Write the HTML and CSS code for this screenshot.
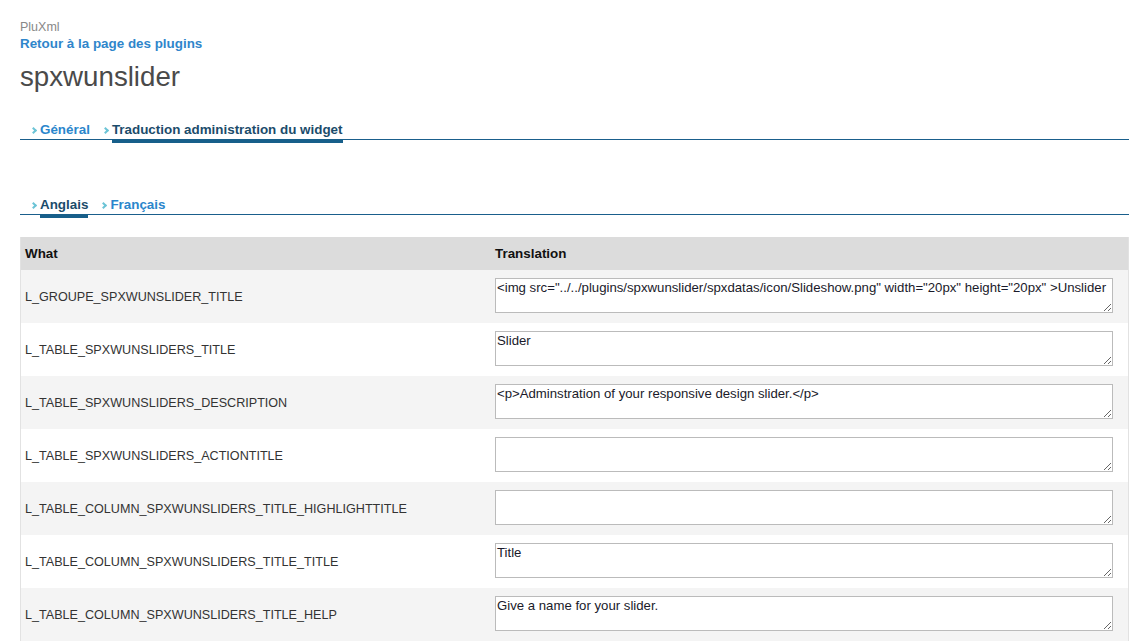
FILE: index.html
```html
<!DOCTYPE html>
<html lang="fr">
<head>
    <meta charset="UTF-8">
    <title>spxwunslider</title>
    <link rel="stylesheet" href="styles.css">
</head>
<body>
    <div class="page">
        <p class="brand">PluXml</p>
        <a class="back" href="#">Retour à la page des plugins</a>
        <h2 class="title">spxwunslider</h2>

        <ul class="tabs">
            <li><a href="#">Général</a></li>
            <li class="active"><a href="#">Traduction administration du widget</a></li>
        </ul>

        <ul class="tabs sub">
            <li class="active"><a href="#">Anglais</a></li>
            <li><a href="#">Français</a></li>
        </ul>

        <table class="trans">
            <thead>
                <tr>
                    <th class="col-what">What</th>
                    <th>Translation</th>
                </tr>
            </thead>
            <tbody>
                <tr>
                    <td>L_GROUPE_SPXWUNSLIDER_TITLE</td>
                    <td><textarea>&lt;img src="../../plugins/spxwunslider/spxdatas/icon/Slideshow.png" width="20px" height="20px" &gt;Unslider</textarea></td>
                </tr>
                <tr>
                    <td>L_TABLE_SPXWUNSLIDERS_TITLE</td>
                    <td><textarea>Slider</textarea></td>
                </tr>
                <tr>
                    <td>L_TABLE_SPXWUNSLIDERS_DESCRIPTION</td>
                    <td><textarea>&lt;p&gt;Adminstration of your responsive design slider.&lt;/p&gt;</textarea></td>
                </tr>
                <tr>
                    <td>L_TABLE_SPXWUNSLIDERS_ACTIONTITLE</td>
                    <td><textarea></textarea></td>
                </tr>
                <tr>
                    <td>L_TABLE_COLUMN_SPXWUNSLIDERS_TITLE_HIGHLIGHTTITLE</td>
                    <td><textarea></textarea></td>
                </tr>
                <tr>
                    <td>L_TABLE_COLUMN_SPXWUNSLIDERS_TITLE_TITLE</td>
                    <td><textarea>Title</textarea></td>
                </tr>
                <tr>
                    <td>L_TABLE_COLUMN_SPXWUNSLIDERS_TITLE_HELP</td>
                    <td><textarea>Give a name for your slider.</textarea></td>
                </tr>
            </tbody>
        </table>
    </div>
</body>
</html>
```

FILE: styles.css
```css
body {
    margin: 0;
    font-family: 'Liberation Sans', Arial, sans-serif;
    background-color: #fff;
    color: #333;
}

.page {
    width: 1109px;
    margin-left: 20px;
    padding-top: 20px;
}

.brand {
    margin: 0;
    font-size: 12.5px;
    line-height: 15px;
    color: #888;
}

.back {
    display: block;
    margin-top: 1px;
    font-size: 13.4px;
    line-height: 16px;
    font-weight: bold;
    color: #2f86cb;
    text-decoration: none;
}

.title {
    margin: 9px 0 0 0;
    font-size: 27.7px;
    line-height: 32px;
    font-weight: normal;
    color: #4a4a4a;
}

.tabs {
    list-style: none;
    margin: 28px 0 0 0;
    padding: 0 0 0 10px;
    display: flex;
    gap: 12px;
    border-bottom: 1px solid #1a5f8c;
    height: 18px;
}

.tabs li {
    display: flex;
    align-items: flex-start;
}

.tabs li::before {
    content: "";
    width: 3px;
    height: 3px;
    border-top: 2px solid #6cc4d6;
    border-right: 2px solid #6cc4d6;
    transform: rotate(45deg);
    margin: 7px 4px 0 1px;
}

.tabs a {
    font-size: 13.4px;
    line-height: 16px;
    padding-top: 1px;
    font-weight: bold;
    color: #2a86cc;
    text-decoration: none;
    height: 18px;
    box-sizing: border-box;
}

.tabs .active a {
    color: #1b4c6b;
    border-bottom: 4px solid #175f8a;
    height: 22px;
}

.tabs.sub {
    margin-top: 56px;
}

.trans {
    margin-top: 22px;
    width: 100%;
    border-collapse: collapse;
    border-left: 1px solid #e2e2e2;
    border-right: 1px solid #e2e2e2;
}

.trans th {
    background-color: #dcdcdc;
    text-align: left;
    font-size: 13.4px;
    color: #111;
    height: 33px;
    padding: 0 4px;
}

.trans .col-what {
    width: 462px;
}

.trans td {
    height: 53px;
    padding: 0 4px;
    font-size: 12.6px;
    color: #333;
    box-sizing: border-box;
}

.trans td:last-child {
    padding: 0 15px 0 4px;
}

.trans tbody tr:nth-child(odd) {
    background-color: #f4f4f4;
}

.trans tbody tr:nth-child(even) {
    background-color: #fff;
}

textarea {
    display: block;
    width: 100%;
    height: 35px;
    box-sizing: border-box;
    border: 1px solid #bbb;
    padding: 1px;
    font-family: 'Liberation Sans', Arial, sans-serif;
    font-size: 13.2px;
    line-height: 15px;
    color: #1a1a2a;
    background-color: #fff;
    margin-top: -2px;
    resize: vertical;
}
```
